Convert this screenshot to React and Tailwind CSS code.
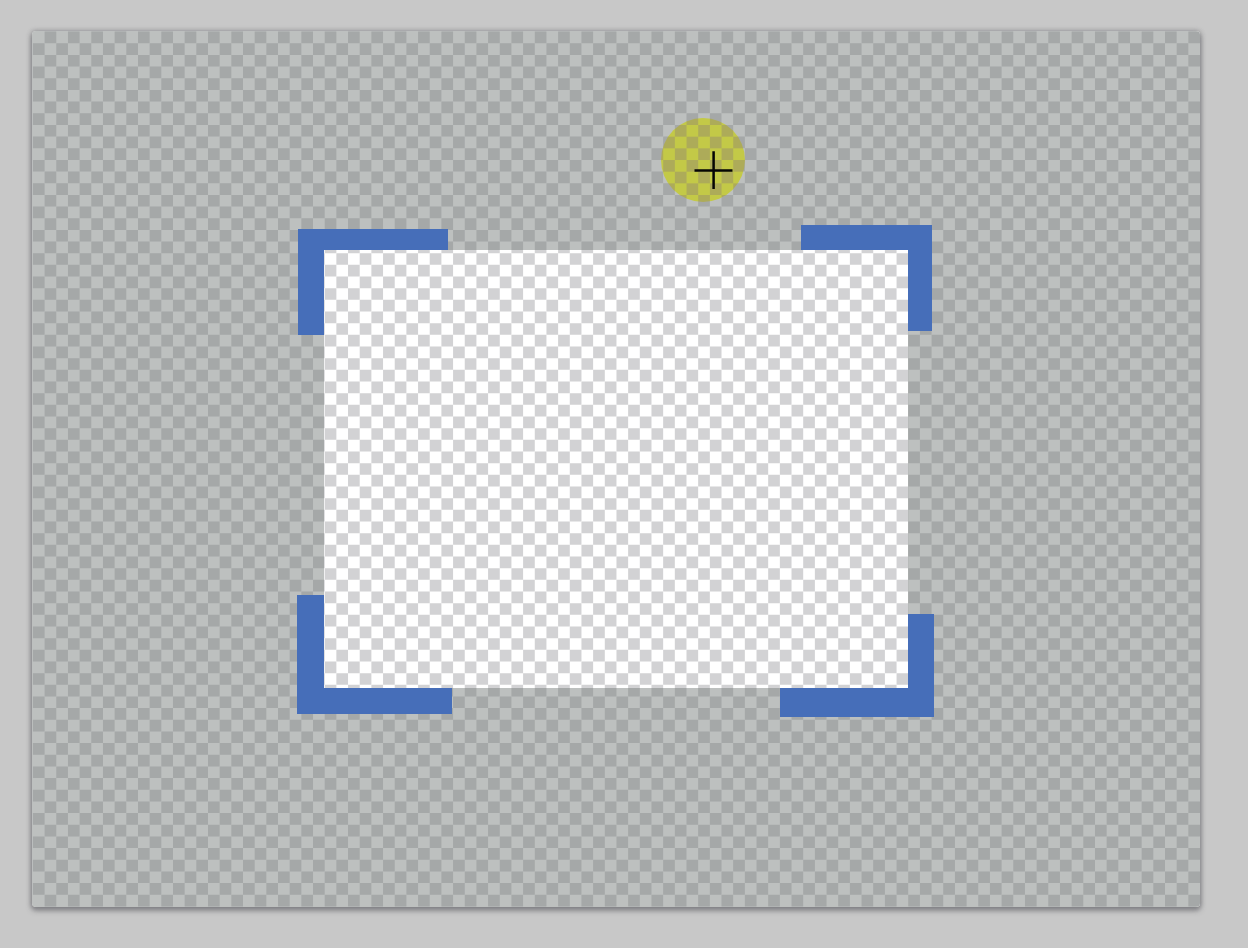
const COLUMNS = 100;
const ROWS = 75;

function Checkerboard() {
  return (
    <svg
      className="absolute inset-0 h-full w-full"
      viewBox={`-0.08 -0.05 ${COLUMNS + 0.08} ${ROWS + 0.1}`}
      preserveAspectRatio="none"
      aria-hidden="true"
    >
      {Array.from({ length: ROWS }, (_, row) => (
        <path
          key={row}
          d={`M${row % 2 === 0 ? 1 : 0} ${row + 0.5}H${COLUMNS}`}
          stroke="#d2d2d4"
          strokeWidth="1"
          strokeDasharray="1 1"
        />
      ))}
    </svg>
  );
}

function CropFrame() {
  return (
    <div className="relative h-1/2 w-1/2 shadow-[0_0_0_1200px_rgba(112,117,115,0.46)]">
      <div className="absolute -top-[21px] -left-[26px] h-[106px] w-[150px] border-t-[21px] border-l-[26px] border-t-[#466eb9] border-l-[#466eb9]" />
      <div className="absolute -top-[25px] -right-[24px] h-[106px] w-[131px] border-t-[25px] border-r-[24px] border-t-[#466eb9] border-r-[#466eb9]" />
      <div className="absolute -bottom-[26px] -left-[27px] h-[119px] w-[155px] border-b-[26px] border-l-[27px] border-b-[#466eb9] border-l-[#466eb9]" />
      <div className="absolute -right-[26px] -bottom-[29px] h-[103px] w-[154px] border-r-[26px] border-b-[29px] border-r-[#466eb9] border-b-[#466eb9]" />
    </div>
  );
}

function Pointer() {
  return (
    <svg
      className="absolute top-[87px] left-[629px] size-[84px]"
      viewBox="0 0 84 84"
      aria-hidden="true"
    >
      <defs>
        <pattern
          id="pointer-cells"
          x="2.2"
          y="7"
          width="23.34"
          height="23.34"
          patternUnits="userSpaceOnUse"
        >
          <rect width="23.34" height="23.34" fill="#c3c947" />
          <path
            d="M11.67 0H23.34V11.67H11.67ZM0 11.67H11.67V23.34H0Z"
            fill="#adab59"
          />
        </pattern>
      </defs>
      <circle cx="42" cy="42" r="42" fill="url(#pointer-cells)" />
      <path d="M33.5 52.4H71.5M52.6 33.3V71" stroke="#050505" strokeWidth="2.5" />
    </svg>
  );
}

export default function App() {
  return (
    <main className="flex min-h-screen bg-[#c8c8c8] pt-[31px] pr-12 pb-[41px] pl-8">
      <section
        aria-label="Canvas"
        className="flex flex-1 rounded-sm shadow-[0_0_4px_1px_rgba(110,110,115,0.4),0_3px_5px_1px_rgba(80,80,85,0.5)]"
      >
        <div className="relative flex flex-1 items-center justify-center overflow-hidden rounded-sm bg-white">
          <Checkerboard />
          <CropFrame />
          <Pointer />
        </div>
      </section>
    </main>
  );
}
